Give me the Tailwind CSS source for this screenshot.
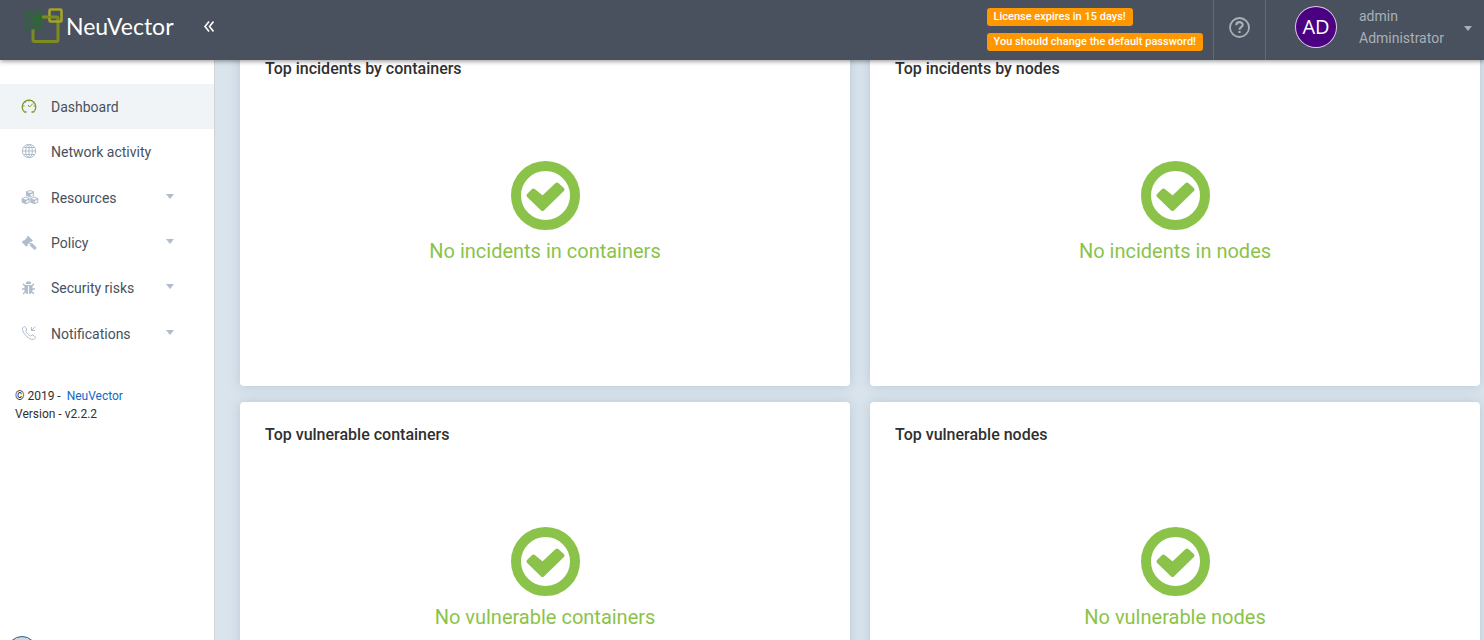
<!DOCTYPE html>
<html lang="en">
<head>
<meta charset="utf-8">
<meta name="viewport" content="width=device-width, initial-scale=1">
<title>NeuVector</title>
<script src="https://cdn.jsdelivr.net/npm/@tailwindcss/browser@4"></script>
</head>
<body class="flex h-screen flex-col overflow-hidden bg-[#dae4ec] font-[Roboto,sans-serif] text-[#303030]">
<svg class="hidden" aria-hidden="true">
  <symbol id="ok" viewBox="0 0 69 69">
    <circle cx="34.5" cy="34.5" r="29.5" fill="none" stroke="currentColor" stroke-width="10"/>
    <path d="M17.500 34.500L22.500 29.500L31.700 37L46 23.500L51.500 28.500L31.500 48Z" fill="currentColor" stroke="currentColor" stroke-width="4" stroke-linejoin="round"/>
  </symbol>
  <symbol id="caret" viewBox="0 0 8 5"><path d="M0 0h8L4 5z" fill="currentColor"/></symbol>
</svg>

<header class="relative z-10 flex h-[60px] shrink-0 items-stretch bg-[#48515d] shadow-[0_1px_5px_rgba(0,0,0,0.45)]">
  <a href="#" class="flex items-start pt-2 pl-[25px] text-white" aria-label="NeuVector home">
    <svg class="h-9 w-[38px]" viewBox="0 0 38 36" fill="none">
      <rect x="8" y="9" width="25" height="24.500" rx="1.500" stroke="#7d8c20" stroke-width="3"/>
      <rect x="24.500" y="1.500" width="12" height="12" rx="1" stroke="#a3a32d" stroke-width="2.600"/>
      <path d="M1.500 5h15v15.500h-15z" fill="#48515d" stroke="#2c6a35" stroke-width="2"/>
      <path d="M17 9h13" stroke="#7d8c20" stroke-width="2.400"/>
      <path d="M4.500 18V7.500H8M6 18l3-3.500 3 3.500 4.500-5" stroke="#2c6a35" stroke-width="1.500"/>
      <path d="M6.500 10Q10 6 17 8.500Q15.500 13 11.500 15Q7.500 14 6.500 10Z" fill="#2c6a35"/>
    </svg>
    <span class="pl-[3px] font-[Lato,sans-serif] text-[23px] leading-9">NeuVector</span>
  </a>
  <button type="button" class="ml-[30px] flex items-start pt-[21px] text-white" aria-label="Collapse menu">
    <svg class="h-[11px] w-[10px]" viewBox="0 0 10 11" fill="none" stroke="currentColor" stroke-width="1.600"><path d="M5 .5L1 5.500L5 10.500M9.500 .5L5.500 5.500L9.500 10.500"/></svg>
  </button>
  <div class="ml-auto flex flex-col items-start gap-[7px] pt-2 pr-[10px] text-[11px] leading-[18px] font-medium text-white">
    <span class="rounded-[3px] bg-[#ff9800] px-[7px]">License expires in 15 days!</span>
    <span class="rounded-[3px] bg-[#ff9800] px-[7px]">You should change the default password!</span>
  </div>
  <button type="button" class="flex w-[53px] items-start justify-center border-x border-[#606974] pt-[17px] text-[#a9b0b8]" aria-label="Help">
    <svg class="size-[21px]" viewBox="0 0 21 21" fill="none" stroke="currentColor" stroke-width="1.800"><circle cx="10.500" cy="10.500" r="9.500"/><path d="M7.300 8.300C7.300 4.200 13.700 4.200 13.700 8C13.700 10.200 10.500 10 10.500 12.700M10.500 14v2" stroke-width="2.200"/></svg>
  </button>
  <button type="button" class="flex w-[218px] items-start pl-[29px] text-left text-[14px] leading-[22px] text-[#a9b0b8]">
    <span class="mt-[6px] flex size-[42px] items-center justify-center rounded-full border border-white/80 bg-[#4b0082] font-[Open_Sans,sans-serif] text-[20px] text-white">AD</span>
    <span class="mt-[5px] ml-[22px] flex flex-col"><span>admin</span><span>Administrator</span></span>
    <svg class="mt-[26px] mr-3 ml-auto h-[5px] w-2"><use href="#caret"/></svg>
  </button>
</header>

<div class="flex min-h-0 flex-1 overflow-hidden">
  <aside class="relative w-[215px] shrink-0 overflow-hidden border-r border-[#d0d4d8] bg-white pt-6">
    <nav aria-label="Main" class="grid h-[272px] grid-rows-6 text-[14px] text-[#48515d]">
      <a href="#" class="flex items-center bg-[#f0f4f7] pl-[21px]">
        <svg class="mr-[14px] mb-px h-4 w-4 text-[#7a9a2b]" viewBox="0 0 16 16" fill="none" stroke="currentColor"><path d="M5.500 14H3.500A6.800 6.800 0 1 1 12.500 14H10.500" stroke-width="1.300"/><path d="M8 1.500v2M1.500 8h2M12.500 8h2M3.500 3.500l1.200 1.200M7 7l1.500 2L12 5.500"/></svg>
        <span class="pt-0.5">Dashboard</span></a>
      <a href="#" class="flex items-center pl-[21px]">
        <svg class="mr-[14px] mb-px h-4 w-4 text-[#afbdcd]" viewBox="0 0 16 16" fill="none" stroke="currentColor"><circle cx="8" cy="8" r="6.700"/><ellipse cx="8" cy="8" rx="3.300" ry="6.700"/><path d="M8 1v14M1 8h14M2.500 4.500h11M2.500 11.500h11"/></svg>
        <span class="pt-0.5">Network activity</span></a>
      <a href="#" class="flex items-center pr-10 pl-[21px]">
        <svg class="mr-3 h-4 w-[18px] text-[#afbdcd]" viewBox="0 0 18 16"><g fill="currentColor"><path d="M9 1l4 1.600v4.200L9 8.600L5 6.800V2.600z"/><path d="M4.700 7.500l4 1.700v4.200l-4 1.900l-4-1.900V9.200z"/><path d="M13.300 7.500l4 1.700v4.200l-4 1.900l-4-1.900V9.200z"/></g><path d="M6.300 3l2.700 1.100L11.700 3L9 2zM2 9.600l2.700 1.100l2.700-1.100l-2.700-1zM10.600 9.600l2.700 1.100L16 9.600l-2.700-1zM9.500 5.500v2L12 6.300V4.500zM5.200 12v2l2.500-1.200V11zM13.800 12v2l2.500-1.200V11z" fill="#fff"/></svg>
        <span class="pt-0.5">Resources</span><svg class="mb-0.5 ml-auto h-[5px] w-2 text-[#afbdcd]"><use href="#caret"/></svg></a>
      <a href="#" class="flex items-center pr-10 pl-[21px]">
        <svg class="mr-[14px] h-4 w-4 text-[#afbdcd]" viewBox="0 0 16 16" fill="currentColor"><path d="M7 1l4.500 4.500l-1.200 1.200l-.8-.3L8.500 7.500L10 9l1-.7l4 4c.6 1.200-.8 2.600-2 2l-4-4L9.600 9.500L7.800 8.100L6.200 9.700l.3.600l-1.200 1.200L1 7l1.200-1.200l.8.200L6.200 2.700L6 2z" stroke="currentColor" stroke-width=".6"/></svg>
        <span class="pt-0.5">Policy</span><svg class="mb-0.5 ml-auto h-[5px] w-2 text-[#afbdcd]"><use href="#caret"/></svg></a>
      <a href="#" class="flex items-center pr-10 pl-[21px]">
        <svg class="mr-[14px] h-4 w-4 text-[#afbdcd]" viewBox="0 0 16 16"><path d="M4.800 4a2.700 2.700 0 0 1 5.400 0zM3.500 5h8v5.500c0 1.700-1.500 3.500-3.500 3.500h-1c-2 0-3.500-1.800-3.500-3.500z" fill="currentColor"/><path d="M4 6L2 3.800M11 6l2-2.200M4 9H1M11 9h3M4.500 11.500L2 14M10.500 11.500L13 14" stroke="currentColor" stroke-width="1.300"/><path d="M7.500 6v8" stroke="#fff"/></svg>
        <span class="pt-0.5">Security risks</span><svg class="mb-0.5 ml-auto h-[5px] w-2 text-[#afbdcd]"><use href="#caret"/></svg></a>
      <a href="#" class="flex items-center pr-10 pl-[21px]">
        <svg class="mr-[14px] h-4 w-4 text-[#afbdcd]" viewBox="0 0 16 16" fill="none" stroke="currentColor"><path d="M3 1.500L1.500 3C1 8 7.500 14.800 12.500 14.500L14.500 13C15 12 12 9.500 11 10L9.800 11.200C8.500 11 5 7.500 4.800 6.200L5.500 5C5.800 4 4 1 3 1.500ZM14.500 1.500L10.500 5.500M10.500 2v3.500H14"/></svg>
        <span class="pt-0.5">Notifications</span><svg class="mb-0.5 ml-auto h-[5px] w-2 text-[#afbdcd]"><use href="#caret"/></svg></a>
    </nav>
    <p class="mt-[31px] pl-[15px] text-[12px] leading-[18px]">© 2019 -&nbsp; <a href="#" class="text-[#1069c9]">NeuVector</a><br>Version - v2.2.2</p>
    <div class="absolute top-[576px] left-[7px] size-[30px] rounded-full border border-[#2a5d8c] bg-[#cbd8e0]"></div>
  </aside>

  <main class="-mt-6 grid flex-1 auto-rows-[350px] grid-cols-2 gap-x-5 gap-y-4 pr-1 pl-[25px]">
    <section class="rounded-[4px] bg-white shadow-[0_0_12px_rgba(120,150,175,0.35)]">
      <h2 class="pt-[23px] pl-[25px] text-[16px] leading-5 font-medium">Top incidents by containers</h2>
      <div class="flex flex-col items-center pt-[82px] text-[#8bc34a]"><svg class="size-[69px]"><use href="#ok"/></svg><p class="mt-[7px] text-[20px] leading-7">No incidents in containers</p></div>
    </section>
    <section class="rounded-[4px] bg-white shadow-[0_0_12px_rgba(120,150,175,0.35)]">
      <h2 class="pt-[23px] pl-[25px] text-[16px] leading-5 font-medium">Top incidents by nodes</h2>
      <div class="flex flex-col items-center pt-[82px] text-[#8bc34a]"><svg class="size-[69px]"><use href="#ok"/></svg><p class="mt-[7px] text-[20px] leading-7">No incidents in nodes</p></div>
    </section>
    <section class="rounded-[4px] bg-white shadow-[0_0_12px_rgba(120,150,175,0.35)]">
      <h2 class="pt-[23px] pl-[25px] text-[16px] leading-5 font-medium">Top vulnerable containers</h2>
      <div class="flex flex-col items-center pt-[82px] text-[#8bc34a]"><svg class="size-[69px]"><use href="#ok"/></svg><p class="mt-[7px] text-[20px] leading-7">No vulnerable containers</p></div>
    </section>
    <section class="rounded-[4px] bg-white shadow-[0_0_12px_rgba(120,150,175,0.35)]">
      <h2 class="pt-[23px] pl-[25px] text-[16px] leading-5 font-medium">Top vulnerable nodes</h2>
      <div class="flex flex-col items-center pt-[82px] text-[#8bc34a]"><svg class="size-[69px]"><use href="#ok"/></svg><p class="mt-[7px] text-[20px] leading-7">No vulnerable nodes</p></div>
    </section>
  </main>
</div>
</body>
</html>
